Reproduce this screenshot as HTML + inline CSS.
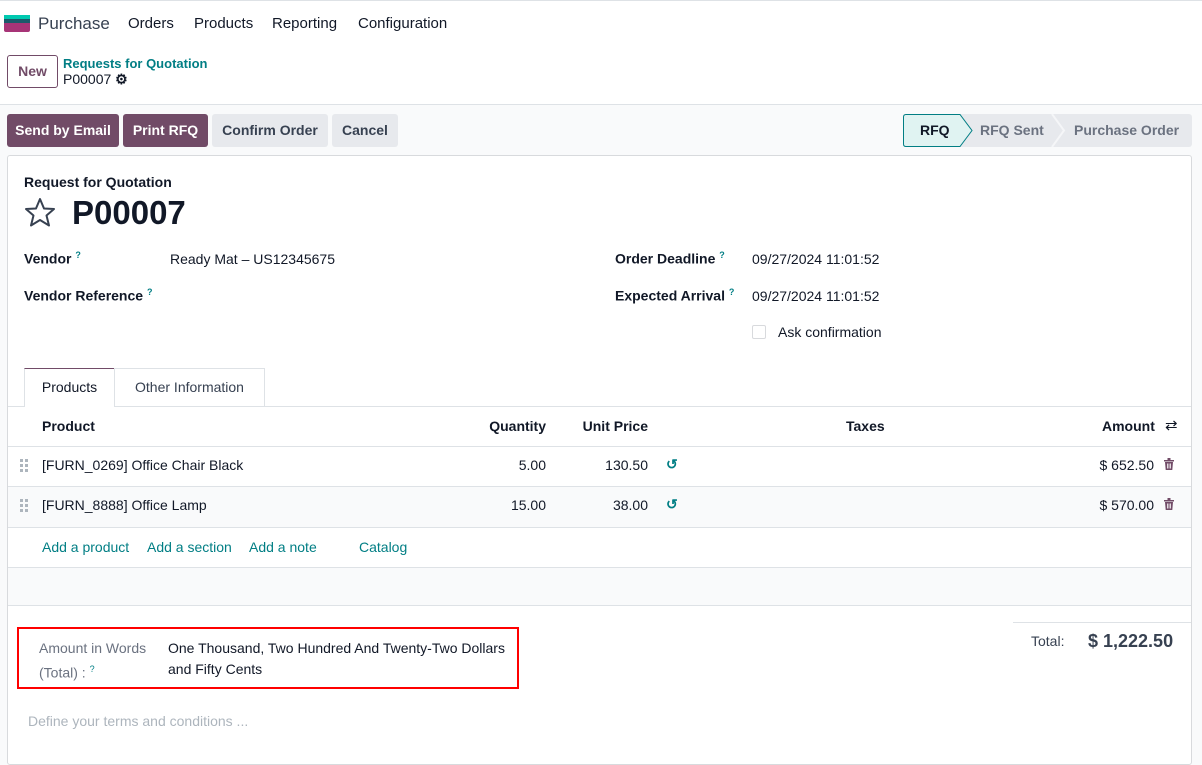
<!DOCTYPE html>
<html><head><meta charset="utf-8"><style>
*{box-sizing:border-box;margin:0;padding:0}
body{width:1202px;height:758px;overflow:hidden;background:#f9fafb;font-family:"Liberation Sans",sans-serif;font-size:14px;color:#374151;position:relative}
.a{position:absolute;white-space:nowrap}
.btn{position:absolute;top:114px;height:33px;line-height:33px;text-align:center;border-radius:3px;font-weight:bold;font-size:14px}
.p{background:#714b67;color:#fff}
.s{background:#e7e9ed;color:#374151}
.teal{color:#017e84}
.b{font-weight:bold;color:#111827}
.q{font-size:9px;color:#017e84;vertical-align:super}
.hr{position:absolute;left:8px;width:1183px;height:1px;background:#dee2e6}
.r{text-align:right}
</style></head><body>
<div class="a" style="left:0;top:0;width:1202px;height:105px;background:#fff;border-bottom:1px solid #dee2e6"></div>
<div class="a" style="left:0;top:0;width:1202px;height:1px;background:#dee2e6"></div>
<div class="a" style="left:4px;top:15px;width:26px;height:4px;background:#00c9b0"></div>
<div class="a" style="left:4px;top:19px;width:26px;height:4px;background:#1b5b6b"></div>
<div class="a" style="left:4px;top:23px;width:26px;height:9px;background:#a73477;border-radius:0 0 2px 2px"></div>
<div class="a" style="left:38px;top:14px;font-size:17px;color:#374151">Purchase</div>
<div class="a" style="left:128px;top:15px;font-size:15px;color:#111827">Orders</div>
<div class="a" style="left:194px;top:15px;font-size:15px;color:#111827">Products</div>
<div class="a" style="left:272px;top:15px;font-size:15px;color:#111827">Reporting</div>
<div class="a" style="left:358px;top:15px;font-size:15px;color:#111827">Configuration</div>
<div class="a" style="left:7px;top:55px;width:51px;height:33px;border:1px solid #714b67;border-radius:3px;color:#714b67;font-weight:bold;text-align:center;line-height:31px">New</div>
<div class="a teal" style="left:63px;top:56px;font-weight:bold;font-size:13px">Requests for Quotation</div>
<div class="a" style="left:63px;top:71px;font-size:14px;color:#111827">P00007 <span style="font-size:14px;font-weight:bold">⚙</span></div>

<div class="btn p" style="left:7px;width:112px">Send by Email</div>
<div class="btn p" style="left:123px;width:85px">Print RFQ</div>
<div class="btn s" style="left:212px;width:116px">Confirm Order</div>
<div class="btn s" style="left:332px;width:66px">Cancel</div>

<svg class="a" style="left:903px;top:114px" width="289" height="33">
<rect x="0" y="0" width="289" height="33" rx="3" fill="#e7e9ed"/>
<path d="M3 .5 H57 L69 16.5 L57 32.5 H3 Q.5 32.5 .5 30 V3 Q.5 .5 3 .5Z" fill="#e0f3f2" stroke="#017e84"/>
<path d="M149 0 L161 16.5 L149 33" fill="none" stroke="#f5f6f8" stroke-width="2"/>
<text x="17" y="21" font-family="Liberation Sans" font-size="14" font-weight="bold" fill="#111827">RFQ</text>
<text x="77" y="21" font-family="Liberation Sans" font-size="14" font-weight="bold" fill="#6b7280">RFQ Sent</text>
<text x="171" y="21" font-family="Liberation Sans" font-size="14" font-weight="bold" fill="#6b7280">Purchase Order</text>
</svg>

<div class="a" style="left:7px;top:155px;width:1185px;height:610px;background:#fff;border:1px solid #d8dadd;border-radius:3px"></div>
<div class="a b" style="left:24px;top:174px;font-size:14px">Request for Quotation</div>
<svg class="a" style="left:24px;top:197px" width="32" height="30" viewBox="0 0 32 30"><path d="M16 2 L20 11.5 L30 12 L22.5 18.5 L25 28.5 L16 23 L7 28.5 L9.5 18.5 L2 12 L12 11.5Z" fill="none" stroke="#374151" stroke-width="2" stroke-linejoin="round"/></svg>
<div class="a b" style="left:72px;top:194px;font-size:33px">P00007</div>

<div class="a b" style="left:24px;top:250px">Vendor <span class="q">?</span></div>
<div class="a" style="left:170px;top:251px;color:#111827">Ready Mat – US12345675</div>
<div class="a b" style="left:24px;top:287px">Vendor Reference <span class="q">?</span></div>
<div class="a b" style="left:615px;top:250px">Order Deadline <span class="q">?</span></div>
<div class="a" style="left:752px;top:251px;color:#111827">09/27/2024 11:01:52</div>
<div class="a b" style="left:615px;top:287px">Expected Arrival <span class="q">?</span></div>
<div class="a" style="left:752px;top:288px;color:#111827">09/27/2024 11:01:52</div>
<div class="a" style="left:752px;top:325px;width:14px;height:14px;border:1px solid #d8dadd;border-radius:2px"></div>
<div class="a" style="left:778px;top:324px;color:#111827">Ask confirmation</div>

<div class="hr" style="top:406px"></div>
<div class="a" style="left:24px;top:368px;width:91px;height:39px;background:#fff;border:1px solid #dee2e6;border-bottom:none;border-top:1px solid #714b67;text-align:center;line-height:37px;color:#111827">Products</div>
<div class="a" style="left:114px;top:368px;width:151px;height:38px;border:1px solid #dee2e6;border-bottom:none;text-align:center;line-height:37px;color:#374151">Other Information</div>

<div class="a b" style="left:42px;top:418px">Product</div>
<div class="a b r" style="left:445px;top:418px;width:101px">Quantity</div>
<div class="a b r" style="left:548px;top:418px;width:100px">Unit Price</div>
<div class="a b" style="left:846px;top:418px">Taxes</div>
<div class="a b" style="left:1102px;top:418px">Amount</div>
<div class="a" style="left:1165px;top:416px;font-size:15px;color:#111827">⇄</div>
<div class="hr" style="top:446px"></div>
<div class="hr" style="top:486px"></div>
<div class="a" style="left:8px;top:487px;width:1183px;height:40px;background:#f9fafb"></div>
<div class="hr" style="top:527px"></div>
<div class="a" style="left:8px;top:568px;width:1183px;height:37px;background:#f9fafb"></div>
<div class="hr" style="top:567px"></div>
<div class="hr" style="top:605px"></div>

<svg class="a" style="left:20px;top:459px" width="8" height="13"><g fill="#adb5bd"><rect x="0" y="0" width="3" height="3"/><rect x="5" y="0" width="3" height="3"/><rect x="0" y="5" width="3" height="3"/><rect x="5" y="5" width="3" height="3"/><rect x="0" y="10" width="3" height="3"/><rect x="5" y="10" width="3" height="3"/></g></svg>
<div class="a" style="left:42px;top:457px;color:#111827">[FURN_0269] Office Chair Black</div>
<div class="a r" style="left:445px;top:457px;width:101px;color:#111827">5.00</div>
<div class="a r" style="left:548px;top:457px;width:100px;color:#111827">130.50</div>
<div class="a teal" style="left:666px;top:456px;font-weight:bold">↺</div>
<div class="a r" style="left:1050px;top:457px;width:104px;color:#111827">$ 652.50</div>
<svg class="a" style="left:1164px;top:458px" width="10" height="12"><path d="M0 2h10v1.5H0zM3.5 0h3v2h-3zM1 4h8l-.7 8H1.7z" fill="#714b67"/><path d="M3.5 5.5v5M5 5.5v5M6.5 5.5v5" stroke="#fff" stroke-width=".8"/></svg>

<svg class="a" style="left:20px;top:499px" width="8" height="13"><g fill="#adb5bd"><rect x="0" y="0" width="3" height="3"/><rect x="5" y="0" width="3" height="3"/><rect x="0" y="5" width="3" height="3"/><rect x="5" y="5" width="3" height="3"/><rect x="0" y="10" width="3" height="3"/><rect x="5" y="10" width="3" height="3"/></g></svg>
<div class="a" style="left:42px;top:497px;color:#111827">[FURN_8888] Office Lamp</div>
<div class="a r" style="left:445px;top:497px;width:101px;color:#111827">15.00</div>
<div class="a r" style="left:548px;top:497px;width:100px;color:#111827">38.00</div>
<div class="a teal" style="left:666px;top:496px;font-weight:bold">↺</div>
<div class="a r" style="left:1050px;top:497px;width:104px;color:#111827">$ 570.00</div>
<svg class="a" style="left:1164px;top:498px" width="10" height="12"><path d="M0 2h10v1.5H0zM3.5 0h3v2h-3zM1 4h8l-.7 8H1.7z" fill="#714b67"/><path d="M3.5 5.5v5M5 5.5v5M6.5 5.5v5" stroke="#fff" stroke-width=".8"/></svg>

<div class="a teal" style="left:42px;top:539px">Add a product</div>
<div class="a teal" style="left:147px;top:539px">Add a section</div>
<div class="a teal" style="left:249px;top:539px">Add a note</div>
<div class="a teal" style="left:359px;top:539px">Catalog</div>

<div class="a" style="left:1013px;top:622px;width:178px;height:1px;background:#dee2e6"></div>
<div class="a" style="left:1031px;top:633px;color:#374151">Total:</div>
<div class="a b" style="left:1088px;top:631px;font-size:18px;color:#374151">$ 1,222.50</div>

<div class="a" style="left:17px;top:627px;width:502px;height:62px;border:2px solid #f00"></div>
<div class="a" style="left:39px;top:638px;color:#6b7280;line-height:21px">Amount in Words<br>(Total) : <span class="q">?</span></div>
<div class="a" style="left:168px;top:638px;color:#111827;line-height:21px">One Thousand, Two Hundred And Twenty-Two Dollars<br>and Fifty Cents</div>
<div class="a" style="left:28px;top:713px;color:#adb5bd">Define your terms and conditions ...</div>
</body></html>
